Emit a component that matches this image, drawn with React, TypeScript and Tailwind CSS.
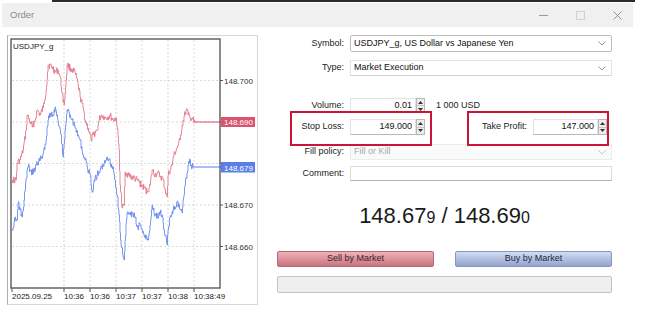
import React from 'react';

const redKeys: [number, number][] = [
  [12, 180], [16, 180], [17, 163], [20, 160], [23, 150], [26, 130], [27, 115], [30, 122], [32, 127], [35, 120],
  [37, 110], [40, 115], [43, 108], [46, 90], [48, 65], [52, 67], [55, 72], [58, 70], [60, 77], [62, 93],
  [64, 105], [66, 80], [67, 65], [70, 68], [72, 70], [75, 73], [78, 85], [80, 97], [83, 108], [85, 120],
  [88, 128], [91, 140], [93, 135], [97, 130], [99, 120], [101, 115], [105, 118], [110, 116], [113, 120], [116, 118],
  [117, 127], [119, 150], [120, 185], [122, 208], [124, 205], [125, 172], [128, 175], [133, 178], [137, 180], [141, 185],
  [144, 188], [147, 192], [150, 185], [152, 170], [155, 175], [157, 173], [160, 176], [163, 180], [165, 190], [167, 197],
  [168, 175], [170, 170], [172, 165], [173, 157], [176, 150], [178, 145], [180, 140], [182, 125], [185, 113], [187, 110],
  [188, 115], [190, 118], [192, 118], [194, 123], [195, 122],
];

const blueKeys: [number, number][] = [
  [12, 230], [14, 222], [15, 217], [17, 220], [18, 203], [20, 210], [22, 217], [24, 200], [25, 190], [27, 170],
  [28, 167], [30, 170], [33, 173], [36, 165], [40, 160], [43, 153], [46, 140], [48, 120], [50, 113], [53, 115],
  [55, 107], [57, 115], [60, 130], [62, 145], [63, 157], [65, 130], [67, 110], [70, 115], [72, 120], [75, 128],
  [78, 135], [80, 140], [83, 155], [85, 160], [87, 167], [90, 175], [92, 192], [94, 180], [97, 175], [100, 170],
  [103, 165], [107, 157], [110, 163], [113, 167], [115, 180], [117, 195], [119, 215], [121, 245], [123, 257], [124, 260],
  [125, 240], [127, 213], [130, 215], [132, 213], [135, 218], [137, 227], [140, 225], [142, 230], [145, 235], [148, 240],
  [150, 225], [152, 205], [155, 215], [157, 217], [160, 213], [162, 215], [164, 230], [167, 245], [168, 230], [170, 217],
  [173, 210], [177, 202], [180, 210], [182, 213], [183, 200], [185, 185], [187, 173], [188, 165], [190, 160], [191, 165],
  [193, 167],
];

// jagged tick line from key points, drawn as small steps
function trace(keys: [number, number][], seed: number) {
  let s = seed;
  const rnd = () => {
    s = (s * 9301 + 49297) % 233280;
    return s / 233280;
  };
  const pts: string[] = [];
  let prevY = keys[0][1];
  for (let i = 0; i < keys.length - 1; i++) {
    const [x0, y0] = keys[i];
    const [x1, y1] = keys[i + 1];
    const n = Math.max(1, Math.round((x1 - x0) * 2));
    for (let k = 0; k < n; k++) {
      const t = k / n;
      const x = x0 + (x1 - x0) * t;
      const y = y0 + (y1 - y0) * t + (k === 0 ? 0 : (rnd() - 0.5) * 7);
      pts.push(`${x.toFixed(1)},${prevY.toFixed(1)}`);
      pts.push(`${x.toFixed(1)},${y.toFixed(1)}`);
      prevY = y;
    }
  }
  const last = keys[keys.length - 1];
  pts.push(`${last[0]},${last[1]}`);
  return pts.join(' ');
}

const priceLevels = [
  { y: 80.5, label: '148.700' },
  { y: 163.5, label: '148.680' },
  { y: 205, label: '148.670' },
  { y: 246.5, label: '148.660' },
];

const timeTicks = [
  { x: 12, label: '2025.09.25' },
  { x: 64, label: '10:36' },
  { x: 90, label: '10:36' },
  { x: 116, label: '10:37' },
  { x: 142, label: '10:37' },
  { x: 168, label: '10:38' },
  { x: 194, label: '10:38:49' },
];

const Chart = () => (
  <svg width="249" height="268" viewBox="0 0 249 268">
    <g transform="translate(-8,-36)" fontFamily="'Liberation Sans', Arial, sans-serif" fontSize="8">
      {[80.5, 122, 163.5, 205, 246.5].map((y) => (
        <line key={y} x1="12" x2="220" y1={y} y2={y} stroke="#cfcfcf" strokeWidth="0.8" strokeDasharray="2 2" />
      ))}
      {timeTicks.slice(1).map((t) => (
        <line key={t.x} x1={t.x} x2={t.x} y1="40" y2="288" stroke="#cfcfcf" strokeWidth="0.8" strokeDasharray="2 2" />
      ))}
      <polyline points={trace(redKeys, 17)} fill="none" stroke="#e47d8c" strokeWidth="0.9" />
      <polyline points={trace(blueKeys, 91)} fill="none" stroke="#6b8cf0" strokeWidth="0.9" />
      <line x1="195" x2="221" y1="122" y2="122" stroke="#d6506a" strokeWidth="1" />
      <line x1="193" x2="221" y1="167" y2="167" stroke="#5b80ea" strokeWidth="1" />
      <rect x="11" y="39" width="209" height="249" fill="none" stroke="#5a5a5a" strokeWidth="1.4" />
      <text x="13" y="49" fill="#222">USDJPY_g</text>
      {priceLevels.map((p) => (
        <g key={p.label}>
          <line x1="220" x2="223" y1={p.y} y2={p.y} stroke="#555" strokeWidth="1" />
          <text x="224" y={p.y + 3} fill="#333">{p.label}</text>
        </g>
      ))}
      <rect x="221" y="117" width="34" height="10" fill="#d9546c" />
      <text x="224" y="125" fill="#fff">148.690</text>
      <rect x="221" y="162" width="34" height="10.5" fill="#5b7fe6" />
      <text x="224" y="170.5" fill="#fff">148.679</text>
      {timeTicks.map((t) => (
        <g key={t.label + t.x}>
          <line x1={t.x} x2={t.x} y1="288" y2="292" stroke="#555" strokeWidth="1" />
          <text x={t.x} y="299" fill="#222">{t.label}</text>
        </g>
      ))}
    </g>
  </svg>
);

const Chevron = () => (
  <svg width="8" height="5" viewBox="0 0 8 5">
    <polyline points="0.5,0.5 4,4 7.5,0.5" fill="none" stroke="#8a8a8a" strokeWidth="0.9" />
  </svg>
);

const Spinner = () => (
  <div className="flex h-full w-[9px] flex-col border border-[#b8b8b8] bg-[#ececec]">
    <div className="flex flex-1 items-center justify-center border-b border-[#c8c8c8]">
      <svg width="5" height="3" viewBox="0 0 5 3">
        <path d="M0 3 L2.5 0 L5 3Z" fill="#333" />
      </svg>
    </div>
    <div className="flex flex-1 items-center justify-center">
      <svg width="5" height="3" viewBox="0 0 5 3">
        <path d="M0 0 L2.5 3 L5 0Z" fill="#333" />
      </svg>
    </div>
  </div>
);

const Label = ({ children, w = 'w-[73px]' }: { children: React.ReactNode; w?: string }) => (
  <div className={`${w} shrink-0 pr-[6px] text-right text-[9px] text-[#222]`}>{children}</div>
);

export default function App() {
  return (
    <div className="relative h-[316px] w-[649px] overflow-hidden bg-white font-['Liberation_Sans',Arial,sans-serif]">
      {/* screen edge */}
      <div className="ml-[52px] mr-[14px] h-[2px] bg-[#2a2a2a]" />

      {/* title bar */}
      <div className="ml-[2px] mt-[1px] flex h-[24px] w-[631px] items-center bg-[#f0f0f0] pl-[8px]">
        <span className="text-[9.5px] text-[#8a8a8a]">Order</span>
        <div className="ml-auto flex items-center">
          <div className="h-px w-[9px] bg-[#9a9a9a]" />
          <div className="ml-[28px] h-[9px] w-[9px] border border-[#d2d2d2]" />
          <svg className="ml-[28px] mr-[11px]" width="9" height="9" viewBox="0 0 9 9">
            <path d="M0.5 0.5 L8.5 8.5 M8.5 0.5 L0.5 8.5" stroke="#8a8a8a" strokeWidth="0.9" />
          </svg>
        </div>
      </div>

      <div className="flex pt-[8px]">
        {/* chart */}
        <div className="ml-[7px] h-[270px] w-[251px] border border-[#d6d6d6] border-l-[#b0b0b0]">
          <Chart />
        </div>

        {/* form */}
        <div className="relative ml-[19px] flex w-[335px] flex-col">
          <div className="flex h-[17px] items-center">
            <Label>Symbol:</Label>
            <div className="flex h-full flex-1 items-center rounded-[2px] border border-[#bdbdbd] pl-[3px] pr-[5px] text-[9px] text-[#111]">
              <span>USDJPY_g, US Dollar vs Japanese Yen</span>
              <span className="ml-auto"><Chevron /></span>
            </div>
          </div>

          <div className="mt-[8px] flex h-[16px] items-center">
            <Label>Type:</Label>
            <div className="flex h-full flex-1 items-center border border-[#e4e4e4] border-b-[#d0d0d0] pl-[3px] pr-[5px] text-[9px] text-[#111]">
              <span>Market Execution</span>
              <span className="ml-auto"><Chevron /></span>
            </div>
          </div>

          <div className="mt-[22px] flex h-[15px] items-center">
            <Label>Volume:</Label>
            <div className="flex h-full w-[66px] items-center justify-end border border-[#e2e2e2] border-b-[#b8b8b8] pr-[3px] text-[9px] text-[#111]">0.01</div>
            <Spinner />
            <span className="ml-[11px] text-[9px] text-[#222]">1 000 USD</span>
          </div>

          <div className="mt-[6px] flex h-[16px] items-center">
            <Label>Stop Loss:</Label>
            <div className="flex h-full w-[66px] items-center justify-end border border-[#e2e2e2] border-b-[#b8b8b8] pr-[3px] text-[9px] text-[#111]">149.000</div>
            <Spinner />
            <Label w="w-[108px]">Take Profit:</Label>
            <div className="flex h-full w-[65px] items-center justify-end border border-[#e2e2e2] border-b-[#b8b8b8] pr-[3px] text-[9px] text-[#111]">147.000</div>
            <Spinner />
          </div>

          <div className="mt-[9px] flex h-[16px] items-center">
            <Label>Fill policy:</Label>
            <div className="flex h-full flex-1 items-center border border-[#ececec] bg-[#fafafa] pl-[3px] pr-[5px] text-[9px] text-[#a8a8a8]">
              <span>Fill or Kill</span>
              <span className="ml-auto opacity-50"><Chevron /></span>
            </div>
          </div>

          <div className="mt-[6px] flex h-[15px] items-center">
            <Label>Comment:</Label>
            <div className="h-full flex-1 border border-[#dcdcdc] border-b-[#b0b0b0]" />
          </div>

          <div className="mt-[22px] flex h-[26px] items-center justify-center">
            <div className="whitespace-pre text-[22px] leading-none text-[#1a1a1a]">
              148.67<span className="text-[16px]">9</span> / 148.69<span className="text-[16px]">0</span>
            </div>
          </div>

          <div className="mt-[22px] flex h-[16px] gap-[21px]">
            <div className="flex flex-1 items-center justify-center rounded-[2px] border border-[#b56874] bg-gradient-to-b from-[#f0b0b8] to-[#c87480] text-[9px] text-[#3a2428]">
              Sell by Market
            </div>
            <div className="flex flex-1 items-center justify-center rounded-[2px] border border-[#8797c0] bg-gradient-to-b from-[#d2dcf4] to-[#93a3cd] text-[9px] text-[#232a3c]">
              Buy by Market
            </div>
          </div>

          <div className="mt-[9px] h-[17px] rounded-[2px] border border-[#c4c4c4] bg-[#efefef]" />

          {/* highlight annotations */}
          <div className="absolute left-[13px] top-[76px] h-[35px] w-[142px] border-2 border-[#cc1438]" />
          <div className="absolute left-[190px] top-[76px] h-[35px] w-[142px] border-2 border-[#cc1438]" />
        </div>
      </div>
    </div>
  );
}
